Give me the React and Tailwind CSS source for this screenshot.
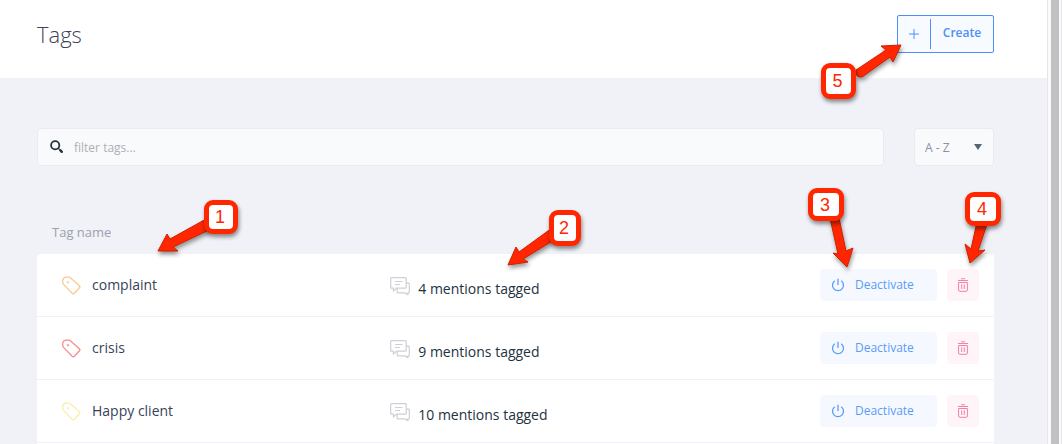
import React, { useState } from 'react';

const tags = [
    { id: 1, name: 'complaint', mentions: 4, color: 'text-[#f8c98c]' },
    { id: 2, name: 'crisis', mentions: 9, color: 'text-[#f58a8c]' },
    { id: 3, name: 'Happy client', mentions: 10, color: 'text-[#f8efa6]' },
];

// Numbered callouts that sit on top of the page
const callouts = [
    { label: '1', box: 'left-[204px] top-[200px] w-[34px] h-[34px]', arrow: 'M158 251 L167 234 L170 239 L206 219 L209 230 L173 247 L178 251 Z' },
    { label: '2', box: 'left-[549px] top-[210px] w-[32px] h-[36px]', arrow: 'M508 265 L516 247 L519 252 L552 228 L554 240 L523 259 L528 262 Z' },
    { label: '3', box: 'left-[808px] top-[188px] w-[36px] h-[33px]', arrow: 'M847 267 L833 253 L838 254 L830 218 L839 218 L846 251 L853 248 Z' },
    { label: '4', box: 'left-[965px] top-[192px] w-[36px] h-[34px]', arrow: 'M970 263 L965 244 L971 249 L977 222 L987 224 L978 251 L985 250 Z' },
    { label: '5', box: 'left-[821px] top-[63px] w-[35px] h-[36px]', arrow: 'M901 45 L881 46 L886 50 L856 70 Q855 78 862 77 L890 57 L893 62 Z' },
];

const TagIcon = ({ className }) => (
    <svg viewBox="0 0 20 20" className={className} fill="none" stroke="currentColor" strokeWidth="1.3" strokeLinejoin="round" aria-hidden="true">
        <path d="M.8 6.4V4.4Q1.2 1.6 4 1.1H7Q8 1.1 8.8 1.9L18.3 10.2Q19.4 11.3 18.4 12.4L13 18.2Q11.8 19.2 10.7 18.2L1.6 8.8Q.8 7.9 .8 6.4Z" />
        <path d="M6.3 5.2V7.8M5 6.5H7.6" strokeWidth="1" />
    </svg>
);

const MentionsIcon = () => (
    <svg viewBox="0 0 20 19" className="w-5 h-[19px] shrink-0 text-[#cdd0d6]" fill="none" stroke="currentColor" strokeWidth="1.2" strokeLinejoin="round" aria-hidden="true">
        <path d="M1.5 .7H15.4Q16.2 .7 16.2 1.5V10.4Q16.2 11.2 15.4 11.2H6.4L3.4 14V11.2H1.5Q.7 11.2 .7 10.4V1.5Q.7 .7 1.5 .7Z" />
        <path d="M5 4.5H12.5M5 7.5H10" />
        <path d="M16.2 6.2H18.4Q19.3 6.2 19.3 7V15.2Q19.3 15.9 18.4 15.9H18V17.6L14.8 15.9H8Q7.2 15.9 7.2 15.2V11.6" />
    </svg>
);

const PowerIcon = () => (
    <svg viewBox="0 0 14 14" className="w-[14px] h-[14px] shrink-0" fill="none" stroke="currentColor" strokeWidth="1.3" aria-hidden="true">
        <path d="M7 .8V7M3.8 2.7A5.5 5.5 0 1 0 10.2 2.7" />
    </svg>
);

const TrashIcon = () => (
    <svg viewBox="0 0 12 14" className="w-3 h-[14px]" fill="none" stroke="currentColor" aria-hidden="true">
        <path d="M4 .8H8" />
        <path d="M1 2.5H11" />
        <path d="M1.6 4.5H10.4V12Q10.4 13.3 9.2 13.3H2.8Q1.6 13.3 1.6 12Z" />
        <path d="M4.7 6.3V11M7.3 6.3V11" />
    </svg>
);

const SearchIcon = () => (
    <svg viewBox="0 0 14 14" className="w-[14px] h-[14px] shrink-0 text-[#23323c]" fill="none" stroke="currentColor" aria-hidden="true">
        <circle cx="5.2" cy="5.2" r="4.1" strokeWidth="1.8" />
        <path d="M8.2 8.2L9.4 9.4" strokeWidth="1.3" />
        <path d="M10.2 10.2L11.8 11.8" strokeWidth="2.4" strokeLinecap="round" />
    </svg>
);

const TagRow = ({ tag }) => (
    <li className="flex items-center h-[63px] pr-[15px] border-b border-[#f0f2f7]">
        <div className="flex items-center gap-[11px] w-3/8 pl-[25px]">
            <TagIcon className={`w-[19px] h-[19px] shrink-0 ${tag.color}`} />
            <span className="text-sm text-[#36435a]">{tag.name}</span>
        </div>
        <div className="flex items-start gap-2 flex-1 pt-[6px]">
            <MentionsIcon />
            <span className="pt-[2px] text-sm text-[#23323f]">{tag.mentions} mentions tagged</span>
        </div>
        <button type="button" className="flex items-center gap-[10px] w-[117px] h-8 pl-[11px] rounded bg-[#f5f9ff] text-[#5b9bf8] text-xs">
            <PowerIcon />
            Deactivate
        </button>
        <button type="button" aria-label={`Delete ${tag.name}`} className="flex items-center justify-center w-8 h-8 ml-[10px] rounded bg-[#fff5f9] text-[#f57fa3]">
            <TrashIcon />
        </button>
    </li>
);

const Callouts = () => (
    <div className="absolute inset-0 overflow-hidden pointer-events-none">
        <svg className="absolute left-0 top-0 w-full h-full drop-shadow-[1px_3px_2px_rgba(0,0,0,0.4)]" fill="#ff2600" stroke="#d01f00" strokeWidth="1" strokeLinejoin="round" aria-hidden="true">
            {callouts.map((item) => (
                <path key={item.label} d={item.arrow} />
            ))}
        </svg>
        {callouts.map((item) => (
            <div
                key={item.label}
                className={`absolute flex items-center justify-center pr-[2px] rounded-[9px] border-[5px] border-[#ff2600] bg-white text-[#ff2600] text-[18px] leading-none font-['Liberation_Sans',sans-serif] shadow-[1px_3px_4px_rgba(0,0,0,0.45)] ${item.box}`}
            >
                {item.label}
            </div>
        ))}
    </div>
);

const App = () => {
    const [filter, setFilter] = useState('');
    const [order, setOrder] = useState('asc');

    const visibleTags = tags
        .filter((tag) => tag.name.toLowerCase().includes(filter.toLowerCase()))
        .sort((a, b) => (order === 'asc' ? a.name.localeCompare(b.name) : b.name.localeCompare(a.name)));

    return (
        <div className="relative flex min-h-screen bg-[#f0f2f7] font-['Open_Sans',sans-serif]">
            <div className="flex flex-col flex-1">
                <header className="flex items-start justify-between h-[78px] pl-[37px] pr-[53px] pt-[15px] bg-white">
                    <h1 className="pt-1 text-[22px] leading-[30px] font-light text-[#3b4558]">Tags</h1>
                    <button type="button" className="flex items-center w-[97px] h-[38px] rounded-xs border border-[#4a90f8] bg-[#f7faff] text-[#4a90f8]">
                        <svg viewBox="0 0 10 10" className="w-[10px] h-[10px] ml-[11px] mr-[11px] shrink-0" stroke="currentColor" strokeWidth="1" aria-hidden="true">
                            <path d="M5 0V10M0 5H10" />
                        </svg>
                        <span className="h-[30px] border-l border-[#4a90f8]" />
                        <span className="flex-1 pb-[2px] text-xs font-semibold">Create</span>
                    </button>
                </header>

                <main className="flex flex-col flex-1 pl-[37px] pr-[53px] pt-[50px]">
                    {/* Filter and sort order */}
                    <div className="flex gap-[30px]">
                        <label className="flex items-center gap-[10px] flex-1 h-[38px] pl-3 rounded border border-[#e9ebf1] bg-[#f9fafc]">
                            <SearchIcon />
                            <input
                                type="text"
                                aria-label="Filter tags"
                                value={filter}
                                onChange={(e) => setFilter(e.target.value)}
                                placeholder="filter tags..."
                                className="flex-1 pt-[2px] bg-transparent text-xs text-[#36435a] placeholder:text-[#adb0b5] outline-none"
                            />
                        </label>
                        <div className="relative w-20">
                            <select
                                aria-label="Sort order"
                                value={order}
                                onChange={(e) => setOrder(e.target.value)}
                                className="w-full h-[38px] pt-[2px] pl-[10px] appearance-none rounded border border-[#e9ebf1] bg-[#f9fafc] text-xs text-[#8c90a3]"
                            >
                                <option value="asc">A - Z</option>
                                <option value="desc">Z - A</option>
                            </select>
                            <svg viewBox="0 0 8 6" className="absolute right-3 top-4 w-2 h-[6px] pointer-events-none" fill="#56656f" aria-hidden="true">
                                <path d="M0 0H8L4 6Z" />
                            </svg>
                        </div>
                    </div>

                    <h2 className="pt-[56px] pb-3 pl-[15px] text-[13px] leading-5 text-[#9ca1ae]">Tag name</h2>
                    <ul className="flex-1 rounded-t bg-white">
                        {visibleTags.map((tag) => (
                            <TagRow key={tag.id} tag={tag} />
                        ))}
                    </ul>
                </main>
            </div>

            {/* Scroll track */}
            <div className="flex w-[15px] pl-[3px] pr-[2px] border-x border-[#e6e6ea] bg-[#fafafa]">
                <div className="w-2 bg-[#c1c1c1]" />
            </div>

            <Callouts />
        </div>
    );
};

export default App;
